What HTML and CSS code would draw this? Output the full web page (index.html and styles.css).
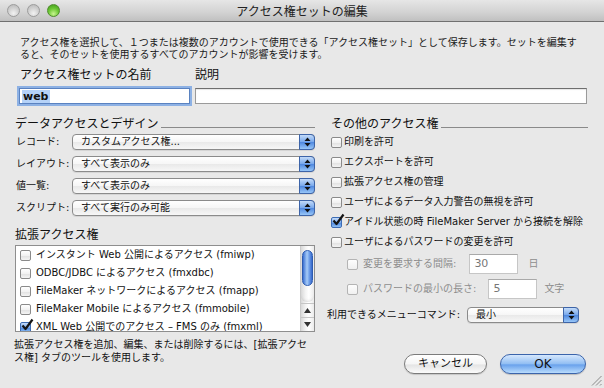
FILE: index.html
```html
<!DOCTYPE html>
<html lang="ja">
<head>
<meta charset="utf-8">
<title>アクセス権セットの編集</title>
<link rel="stylesheet" href="styles.css">
</head>
<body>
<div class="window">
  <header class="titlebar">
    <div class="lights">
      <span class="light gray"></span>
      <span class="light gray"></span>
      <span class="light green"></span>
    </div>
    <div class="title">アクセス権セットの編集</div>
    <div></div>
  </header>

  <main class="content">
    <p class="intro">アクセス権を選択して、１つまたは複数のアカウントで使用できる「アクセス権セット」として保存します。セットを編集す<br>ると、そのセットを使用するすべてのアカウントが影響を受けます。</p>

    <div class="name-grid">
      <div class="big first">アクセス権セットの名前</div>
      <div class="big">説明</div>
      <div class="field focus"><span class="sel">web</span></div>
      <div class="field"></div>
    </div>

    <div class="columns">
      <section class="left">
        <h2 class="group">データアクセスとデザイン</h2>
        <div class="prows">
          <div class="prow"><span class="plabel">レコード:</span><div class="popup"><span class="ptext">カスタムアクセス権...</span><span class="cap"><svg width="7" height="10" viewBox="0 0 7 10"><path d="M3.5 0.5 L6.5 4 H0.5Z M0.5 6 H6.5 L3.5 9.5Z" fill="#111"/></svg></span></div></div>
          <div class="prow"><span class="plabel">レイアウト:</span><div class="popup"><span class="ptext">すべて表示のみ</span><span class="cap"><svg width="7" height="10" viewBox="0 0 7 10"><path d="M3.5 0.5 L6.5 4 H0.5Z M0.5 6 H6.5 L3.5 9.5Z" fill="#111"/></svg></span></div></div>
          <div class="prow"><span class="plabel">値一覧:</span><div class="popup"><span class="ptext">すべて表示のみ</span><span class="cap"><svg width="7" height="10" viewBox="0 0 7 10"><path d="M3.5 0.5 L6.5 4 H0.5Z M0.5 6 H6.5 L3.5 9.5Z" fill="#111"/></svg></span></div></div>
          <div class="prow"><span class="plabel">スクリプト:</span><div class="popup"><span class="ptext">すべて実行のみ可能</span><span class="cap"><svg width="7" height="10" viewBox="0 0 7 10"><path d="M3.5 0.5 L6.5 4 H0.5Z M0.5 6 H6.5 L3.5 9.5Z" fill="#111"/></svg></span></div></div>
        </div>

        <h2 class="plain">拡張アクセス権</h2>
        <div class="list">
          <ul>
            <li><span class="cb"></span>インスタント Web 公開によるアクセス (fmiwp)</li>
            <li><span class="cb"></span>ODBC/JDBC によるアクセス (fmxdbc)</li>
            <li><span class="cb"></span>FileMaker ネットワークによるアクセス (fmapp)</li>
            <li><span class="cb"></span>FileMaker Mobile によるアクセス (fmmobile)</li>
            <li><span class="cb checked"><svg class="tick" width="14" height="14" viewBox="0 0 14 14"><path d="M2.5 7.5 L5.5 11 L12.5 1.5" fill="none" stroke="#151515" stroke-width="2.2" stroke-linejoin="round"/></svg></span>XML Web 公開でのアクセス – FMS のみ (fmxml)</li>
          </ul>
          <div class="sbar">
            <div class="thumb"></div>
            <div class="track-end"></div>
            <div class="arr"><svg width="7" height="5" viewBox="0 0 7 5"><path d="M3.5 0 L7 5 H0Z" fill="#333"/></svg></div>
            <div class="arr"><svg width="7" height="5" viewBox="0 0 7 5"><path d="M0 0 H7 L3.5 5Z" fill="#333"/></svg></div>
          </div>
        </div>
        <p class="help">拡張アクセス権を追加、編集、または削除するには、[拡張アクセ<br>ス権] タブのツールを使用します。</p>
      </section>

      <section class="right">
        <h2 class="group indent">その他のアクセス権</h2>
        <div class="checks">
          <div class="check"><span class="cb"></span>印刷を許可</div>
          <div class="check"><span class="cb"></span>エクスポートを許可</div>
          <div class="check"><span class="cb"></span>拡張アクセス権の管理</div>
          <div class="check"><span class="cb"></span>ユーザによるデータ入力警告の無視を許可</div>
          <div class="check"><span class="cb checked"><svg class="tick" width="14" height="14" viewBox="0 0 14 14"><path d="M2.5 7.5 L5.5 11 L12.5 1.5" fill="none" stroke="#151515" stroke-width="2.2" stroke-linejoin="round"/></svg></span>アイドル状態の時 FileMaker Server から接続を解除</div>
          <div class="check"><span class="cb"></span>ユーザによるパスワードの変更を許可</div>
        </div>
        <div class="subs">
          <div class="sub"><span class="cb dis"></span><span>変更を要求する間隔:</span><span class="num n1">30</span><span>日</span></div>
          <div class="sub"><span class="cb dis"></span><span>パスワードの最小の長さ:</span><span class="num n2">5</span><span>文字</span></div>
        </div>
        <div class="menu-row">
          <span>利用できるメニューコマンド:</span>
          <div class="popup small"><span class="ptext">最小</span><span class="cap"><svg width="7" height="10" viewBox="0 0 7 10"><path d="M3.5 0.5 L6.5 4 H0.5Z M0.5 6 H6.5 L3.5 9.5Z" fill="#111"/></svg></span></div>
        </div>
        <div class="buttons">
          <button class="btn cancel">キャンセル</button>
          <button class="btn ok">OK</button>
        </div>
      </section>
    </div>
  </main>
  <div class="grip"><svg width="11" height="11" viewBox="0 0 11 11"><path d="M10.5 1 L1 10.5 M10.5 5 L5 10.5 M10.5 9 L9 10.5" stroke="#8a8a8a" stroke-width="1"/></svg></div>
</div>
</body>
</html>
```

FILE: styles.css
```css
* { box-sizing: border-box; margin: 0; padding: 0; }
html, body { width: 604px; height: 388px; overflow: hidden; }
body {
  font-family: "DejaVu Sans", "Noto Sans CJK JP", sans-serif;
  font-size: 10px;
  color: #111;
  background: #e8e8e8;
}
.window {
  position: relative;
  width: 604px;
  height: 388px;
  background: #e8e8e8;
  display: flex;
  flex-direction: column;
}
.titlebar {
  height: 22px;
  flex: none;
  display: grid;
  grid-template-columns: 1fr auto 1fr;
  align-items: center;
  background: linear-gradient(#e6e6e6, #d2d2d2 60%, #c0c0c0);
  border-bottom: 1px solid #707070;
}
.lights { display: flex; gap: 7px; padding-left: 7px; }
.light {
  width: 13px; height: 13px; border-radius: 50%;
  border: 1px solid #9c9c9c;
  background: radial-gradient(circle at 50% 75%, #f2f2f2 0%, #d2d2d2 50%, #b4b4b4 100%);
}
.light.green {
  border-color: #4f8b2c;
  background: radial-gradient(circle at 50% 80%, #c8f590 0%, #6dc835 50%, #3d9a18 100%);
}
.title {
  font-family: "Noto Sans CJK JP", sans-serif;
  font-size: 12px;
  line-height: 14px;
  color: #222;
}
.content {
  flex: 1;
  padding: 15px 16px 0 15px;
  display: flex;
  flex-direction: column;
}
.intro { margin-left: 5px; line-height: 12px; color: #1a1a1a; }
.name-grid {
  margin: 7px 0 0 2px;
  display: grid;
  grid-template-columns: 175px 392px;
  column-gap: 3px;
  row-gap: 6px;
}
.big { font-size: 12px; line-height: 14px; }
.big.first { padding-left: 3px; }
.field {
  height: 16px;
  background: #fff;
  border: 1px solid #9a9a9a;
  border-top-color: #6e6e6e;
  box-shadow: inset 0 1px 1px rgba(0,0,0,0.10);
}
.field.focus {
  margin: 0 2px;
  border-color: #5a82c0;
  box-shadow: 0 0 0 2px #8db1e4;
  padding: 1px 0 0 2px;
  display: flex;
  align-items: flex-start;
}
.sel {
  background: #b5d2f8;
  font-size: 11px;
  font-weight: bold;
  line-height: 13px;
  padding: 0 1px;
}
.columns { display: flex; gap: 12px; margin-top: 13px; }
.left { width: 300px; display: flex; flex-direction: column; }
.right { width: 261px; display: flex; flex-direction: column; }
.group {
  display: flex;
  align-items: flex-end;
  font-size: 12px;
  line-height: 14px;
  font-weight: normal;
}
.group::after {
  content: "";
  flex: 1;
  border-bottom: 1px solid #8a8a8a;
  margin: 0 0 3px 3px;
}
.group.indent { padding-left: 4px; }
.plain { font-size: 12px; line-height: 14px; font-weight: normal; margin-top: 12px; }
.prows { margin-top: 3px; display: flex; flex-direction: column; gap: 6px; }
.prow { display: flex; align-items: center; height: 16px; }
.plabel { width: 57px; padding-left: 1px; line-height: 14px; }
.popup {
  flex: 1;
  height: 16px;
  display: flex;
  align-items: center;
  padding-left: 8px;
  border: 1px solid #8b8b8b;
  border-radius: 4px;
  background: linear-gradient(#ffffff, #f6f6f6 50%, #e9e9e9 52%, #f7f7f7);
  box-shadow: 0 1px 0 rgba(0,0,0,0.08);
}
.ptext { line-height: 14px; }
.cap {
  margin: -1px -1px -1px auto;
  align-self: stretch;
  width: 16px;
  border: 1px solid #3d64a8;
  border-radius: 0 4px 4px 0;
  background: linear-gradient(#c3dbf9, #79a9ec 48%, #4f88df 52%, #97c6f8);
  display: flex;
  align-items: center;
  justify-content: center;
}
.list {
  margin-top: 3px;
  height: 87px;
  border: 1px solid #8e8e8e;
  background: #fff;
  display: flex;
  overflow: hidden;
}
.list ul { list-style: none; flex: 1; }
.list li {
  height: 18px;
  display: flex;
  align-items: center;
  gap: 5px;
  padding-left: 4px;
  line-height: 12px;
  white-space: nowrap;
}
.cb {
  position: relative;
  flex: none;
  width: 11px;
  height: 11px;
  border: 1px solid #8a8a8a;
  border-radius: 2px;
  background: linear-gradient(#ffffff, #f2f2f2 50%, #e2e2e2 55%, #f4f4f4);
}
.cb.checked {
  border-color: #3d6cb4;
  background: linear-gradient(#c7ddfa, #7aaaee 50%, #4d87de 55%, #8fc0f6);
}
.cb.dis { border-color: #b4b4b4; background: linear-gradient(#fdfdfd, #f0f0f0); }
.tick { position: absolute; left: -1px; top: -5px; }
.sbar {
  width: 14px;
  flex: none;
  border-left: 1px solid #cbcbcb;
  background: linear-gradient(90deg, #d9d9d9, #f3f3f3 35%, #ffffff 60%, #ebebeb);
  display: flex;
  flex-direction: column;
}
.thumb {
  margin: 4px 0 0 1px;
  width: 11px;
  height: 36px;
  border-radius: 6px;
  border: 1px solid #2e5cb0;
  background: linear-gradient(90deg, #3a6fd2, #a7ccf7 45%, #78a6ec 65%, #3568cc);
}
.track-end {
  flex: 1;
  border-bottom-left-radius: 6px;
  border-bottom-right-radius: 6px;
  box-shadow: inset 0 -3px 3px -2px rgba(0,0,0,0.12);
  margin-bottom: 1px;
}
.arr {
  height: 14px;
  border-top: 1px solid #c6c6c6;
  display: flex;
  align-items: center;
  justify-content: center;
}
.help { margin: 6px 0 0 -1px; line-height: 13px; }
.checks { margin-top: 1px; display: flex; flex-direction: column; }
.check {
  height: 20px;
  display: flex;
  align-items: center;
  gap: 2px;
  padding-left: 4px;
  line-height: 14px;
  white-space: nowrap;
}
.subs { margin-top: 2px; display: flex; flex-direction: column; gap: 5px; padding-left: 20px; }
.sub {
  height: 20px;
  display: flex;
  align-items: center;
  color: #8d8d8d;
  line-height: 14px;
}
.sub .cb { margin-right: 5px; }
.num {
  width: 49px;
  height: 20px;
  background: #fff;
  border: 1px solid #c6c6c6;
  border-top-color: #a9a9a9;
  padding: 2px 0 0 4px;
  color: #777;
  font-size: 11px;
  line-height: 14px;
}
.n1 { margin: 0 10px 0 13px; }
.n2 { margin: 0 7px 0 12px; }
.menu-row {
  margin-top: 8px;
  height: 16px;
  display: flex;
  align-items: center;
  line-height: 14px;
}
.popup.small { flex: none; width: 112px; margin: 0 9px 0 auto; }
.buttons {
  margin-top: 31px;
  display: flex;
  justify-content: flex-end;
  gap: 13px;
  padding-right: 2px;
}
.btn {
  height: 20px;
  border-radius: 10px;
  font-family: "DejaVu Sans", "Noto Sans CJK JP", sans-serif;
  font-size: 11px;
  line-height: 14px;
  color: #111;
}
.btn.cancel {
  width: 83px;
  border: 1px solid #7b7b7b;
  background: linear-gradient(#ffffff, #f5f5f5 50%, #e4e4e4 55%, #fbfbfb);
  box-shadow: 0 1px 1px rgba(0,0,0,0.15);
}
.btn.ok {
  width: 86px;
  border: 1px solid #3b64ab;
  background: linear-gradient(#d6e8fd, #93bff3 48%, #6aa2ec 55%, #b9dcfd);
  box-shadow: 0 1px 1px rgba(0,0,0,0.2);
  font-size: 12px;
}
.grip { position: absolute; right: 2px; bottom: 2px; width: 11px; height: 11px; }
```
